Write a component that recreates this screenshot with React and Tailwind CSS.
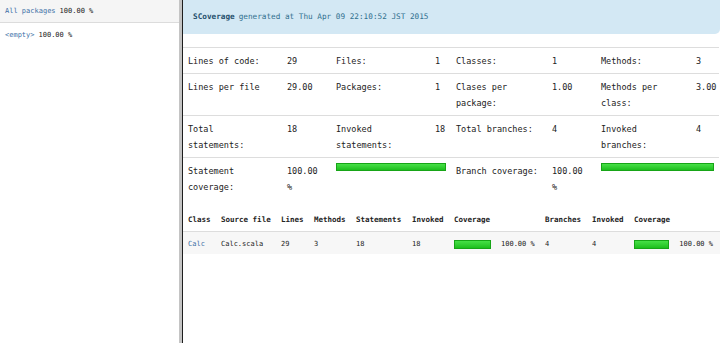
import React from "react";

const mono = { fontFamily: '"DejaVu Sans Mono", "Liberation Mono", monospace' };

function Bar({ w, h }) {
  return (
    <div
      className={`${w} ${h} border border-[#17a517] bg-gradient-to-b from-[#46e046] to-[#1cbf1c]`}
    />
  );
}

const stats = [
  [["Lines of code:"], ["29"], ["Files:"], ["1"], ["Classes:"], ["1"], ["Methods:"], ["3"]],
  [["Lines per file"], ["29.00"], ["Packages:"], ["1"], ["Clases per", "package:"], ["1.00"], ["Methods per", "class:"], ["3.00"]],
  [["Total", "statements:"], ["18"], ["Invoked", "statements:"], ["18"], ["Total branches:"], ["4"], ["Invoked", "branches:"], ["4"]],
];

function Cell({ lines, cls = "" }) {
  return (
    <div className={`px-[5px] pt-[5px] pb-[4px] leading-[16px] whitespace-nowrap ${cls}`}>
      {lines.map((l, i) => (
        <div key={i}>{l}</div>
      ))}
    </div>
  );
}

export default function App() {
  return (
    <div className="w-[720px] h-[343px] flex bg-white text-[#333] overflow-hidden" style={mono}>
      {/* left pane */}
      <div className="w-[179px] shrink-0 flex flex-col">
        <div className="h-[23px] bg-[#f5f5f5] border-b border-[#dcdcdc] flex items-center px-[5px] text-[7px] whitespace-nowrap">
          <span className="text-[#3c6fa6]">All packages</span>
          <span className="ml-[4px] text-[#222]">100.00 %</span>
        </div>
        <div className="px-[5px] pt-[6px] text-[7px] leading-[12px] whitespace-nowrap">
          <span className="text-[#3c6fa6]">&lt;empty&gt;</span>
          <span className="ml-[4px] text-[#222]">100.00 %</span>
        </div>
      </div>
      {/* divider */}
      <div className="w-[3px] shrink-0 bg-[#c4c4c4]" />
      <div className="w-px shrink-0 bg-[#1e1e1e]" />
      {/* right pane */}
      <div className="flex-1 flex flex-col">
        <div className="h-[34px] bg-[#d3e8f4] rounded-br-[5px] flex items-center px-[10px] text-[7.7px] text-[#31708f] whitespace-nowrap">
          <span className="font-bold text-[#234e6b]">SCoverage</span>
          <span className="ml-[4px]">generated at Thu Apr 09 22:10:52 JST 2015</span>
        </div>
        <div className="mt-[13px] grid grid-cols-[99px_49px_99px_21px_96px_49px_95px_28px] text-[8.5px] text-[#222]">
          {stats.map((row, ri) =>
            row.map((lines, ci) => (
              <Cell key={`${ri}-${ci}`} lines={lines} cls="border-t border-[#dddddd]" />
            ))
          )}
          <Cell lines={["Statement", "coverage:"]} cls="border-t border-[#dddddd]" />
          <Cell lines={["100.00", "%"]} cls="border-t border-[#dddddd]" />
          <div className="col-span-2 border-t border-[#dddddd] px-[5px] pt-[5px]">
            <Bar w="w-[110px]" h="h-[8px]" />
          </div>
          <Cell lines={["Branch coverage:"]} cls="border-t border-[#dddddd]" />
          <Cell lines={["100.00", "%"]} cls="border-t border-[#dddddd]" />
          <div className="col-span-2 border-t border-[#dddddd] px-[5px] pt-[5px]">
            <Bar w="w-[113px]" h="h-[8px]" />
          </div>
        </div>
        <div className="mt-[8px] grid grid-cols-[33px_60px_33px_42px_56px_42px_91px_47px_42px_89px] text-[7.5px] font-bold text-[#222] border-b border-[#dddddd] pt-[5px] pb-[3px] leading-[16px] whitespace-nowrap">
          <div className="px-[5px]">Class</div>
          <div className="px-[5px]">Source file</div>
          <div className="px-[5px]">Lines</div>
          <div className="px-[5px]">Methods</div>
          <div className="px-[5px]">Statements</div>
          <div className="px-[5px]">Invoked</div>
          <div className="px-[5px]">Coverage</div>
          <div className="px-[5px]">Branches</div>
          <div className="px-[5px]">Invoked</div>
          <div className="px-[5px]">Coverage</div>
        </div>
        <div className="grid grid-cols-[33px_60px_33px_42px_56px_42px_91px_47px_42px_89px] text-[7px] text-[#222] bg-[#f7f7f7] pt-[4px] pb-[2px] leading-[16px] whitespace-nowrap items-center">
          <div className="px-[5px] text-[#3c6fa6]">Calc</div>
          <div className="px-[5px]">Calc.scala</div>
          <div className="px-[5px]">29</div>
          <div className="px-[5px]">3</div>
          <div className="px-[5px]">18</div>
          <div className="px-[5px]">18</div>
          <div className="px-[5px] flex items-center">
            <Bar w="w-[37px]" h="h-[9px]" />
            <span className="ml-[10px]">100.00 %</span>
          </div>
          <div className="px-[5px]">4</div>
          <div className="px-[5px]">4</div>
          <div className="px-[5px] flex items-center">
            <Bar w="w-[37px]" h="h-[9px]" />
            <span className="ml-[10px]">100.00 %</span>
          </div>
        </div>
      </div>
    </div>
  );
}
